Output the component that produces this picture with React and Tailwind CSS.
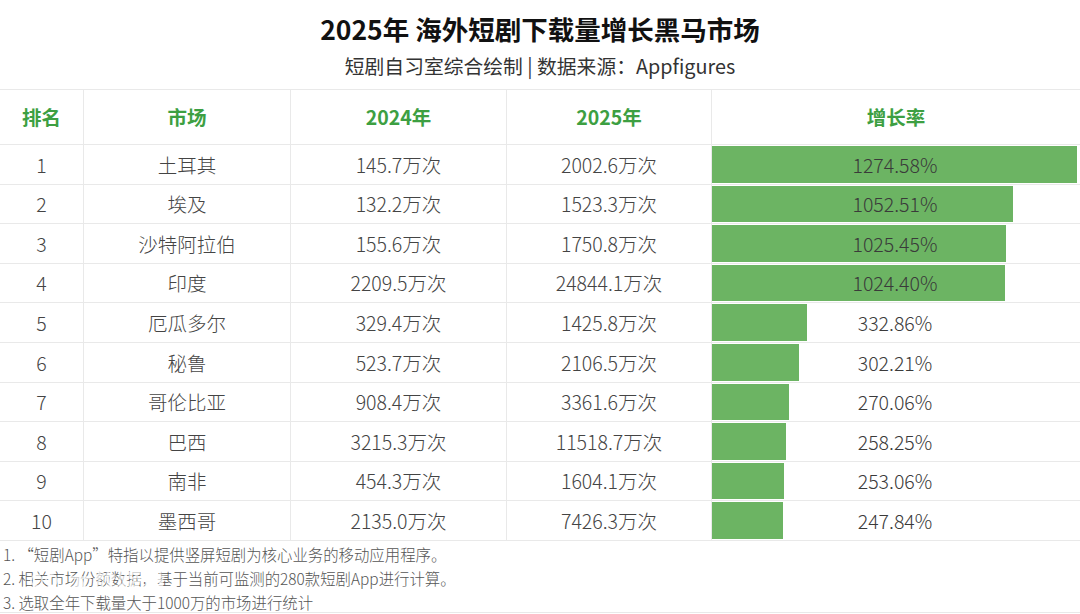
import React from "react";

const rows = [
  ["1", "土耳其", "145.7万次", "2002.6万次", 1274.58],
  ["2", "埃及", "132.2万次", "1523.3万次", 1052.51],
  ["3", "沙特阿拉伯", "155.6万次", "1750.8万次", 1025.45],
  ["4", "印度", "2209.5万次", "24844.1万次", 1024.4],
  ["5", "厄瓜多尔", "329.4万次", "1425.8万次", 332.86],
  ["6", "秘鲁", "523.7万次", "2106.5万次", 302.21],
  ["7", "哥伦比亚", "908.4万次", "3361.6万次", 270.06],
  ["8", "巴西", "3215.3万次", "11518.7万次", 258.25],
  ["9", "南非", "454.3万次", "1604.1万次", 253.06],
  ["10", "墨西哥", "2135.0万次", "7426.3万次", 247.84],
];

const MAX = 1274.58;

const App = () => {
  return (
    <div
      className="w-[1080px] h-[614px] bg-white relative overflow-hidden text-[#444]"
      style={{ fontFamily: '"Noto Sans CJK SC", "Noto Sans", sans-serif' }}
    >
      <div className="h-[90px] border-b border-[#e9e9e9] flex flex-col items-center">
        <h1 className="text-[26.5px] font-bold text-[#111] leading-none mt-[16px]">
          2025年 海外短剧下载量增长黑马市场
        </h1>
        <p className="text-[19.8px] text-[#333] leading-none mt-[13px]">
          短剧自习室综合绘制 | 数据来源：Appfigures
        </p>
      </div>

      <div className="grid grid-cols-[84px_207px_216px_205px_1fr] h-[55px] border-b border-[#e9e9e9] text-[19.5px] font-bold text-[#3d9f42]">
        <div className="flex items-center justify-center border-r border-[#e9e9e9]">排名</div>
        <div className="flex items-center justify-center border-r border-[#e9e9e9]">市场</div>
        <div className="flex items-center justify-center border-r border-[#e9e9e9]">2024年</div>
        <div className="flex items-center justify-center border-r border-[#e9e9e9]">2025年</div>
        <div className="flex items-center justify-center">增长率</div>
      </div>

      {rows.map((r) => (
        <div
          key={r[0]}
          className="grid grid-cols-[84px_207px_216px_205px_1fr] h-[39.6px] border-b border-[#e9e9e9] text-[19.5px] font-light"
        >
          <div className="flex items-center justify-center border-r border-[#e9e9e9]">{r[0]}</div>
          <div className="flex items-center justify-center border-r border-[#e9e9e9]">{r[1]}</div>
          <div className="flex items-center justify-center border-r border-[#e9e9e9]">{r[2]}</div>
          <div className="flex items-center justify-center border-r border-[#e9e9e9]">{r[3]}</div>
          <div className="relative flex items-center justify-center pr-[2px]">
            <div
              className="absolute left-0 top-[1px] bottom-[1px] bg-[#6cb463]"
              style={{ width: `${(r[4] / MAX) * 365}px` }}
            ></div>
            <span className="relative text-[#3a3a3a]">{r[4].toFixed(2)}%</span>
          </div>
        </div>
      ))}

      <div className="h-[72px] border-b border-[#e9e9e9] px-[3px] pt-[1px] text-[15.4px] font-light leading-[24px] text-[#555]">
        <p>1. “短剧App”特指以提供竖屏短剧为核心业务的移动应用程序。</p>
        <p>2. 相关市场份额数据，基于当前可监测的280款短剧App进行计算。</p>
        <p>3. 选取全年下载量大于1000万的市场进行统计</p>
      </div>

      <div className="absolute left-[30px] top-[568px] flex items-center gap-[2px] text-white/70 pointer-events-none">
        <span className="inline-block w-[13px] h-[13px] rounded-full border-2 border-white/70"></span>
        <span className="inline-block w-[13px] h-[13px] rounded-full border-2 border-white/70"></span>
        <span className="text-[24px] font-bold tracking-wide ml-2 leading-none">大数跨境</span>
      </div>
    </div>
  );
};

export default App;
